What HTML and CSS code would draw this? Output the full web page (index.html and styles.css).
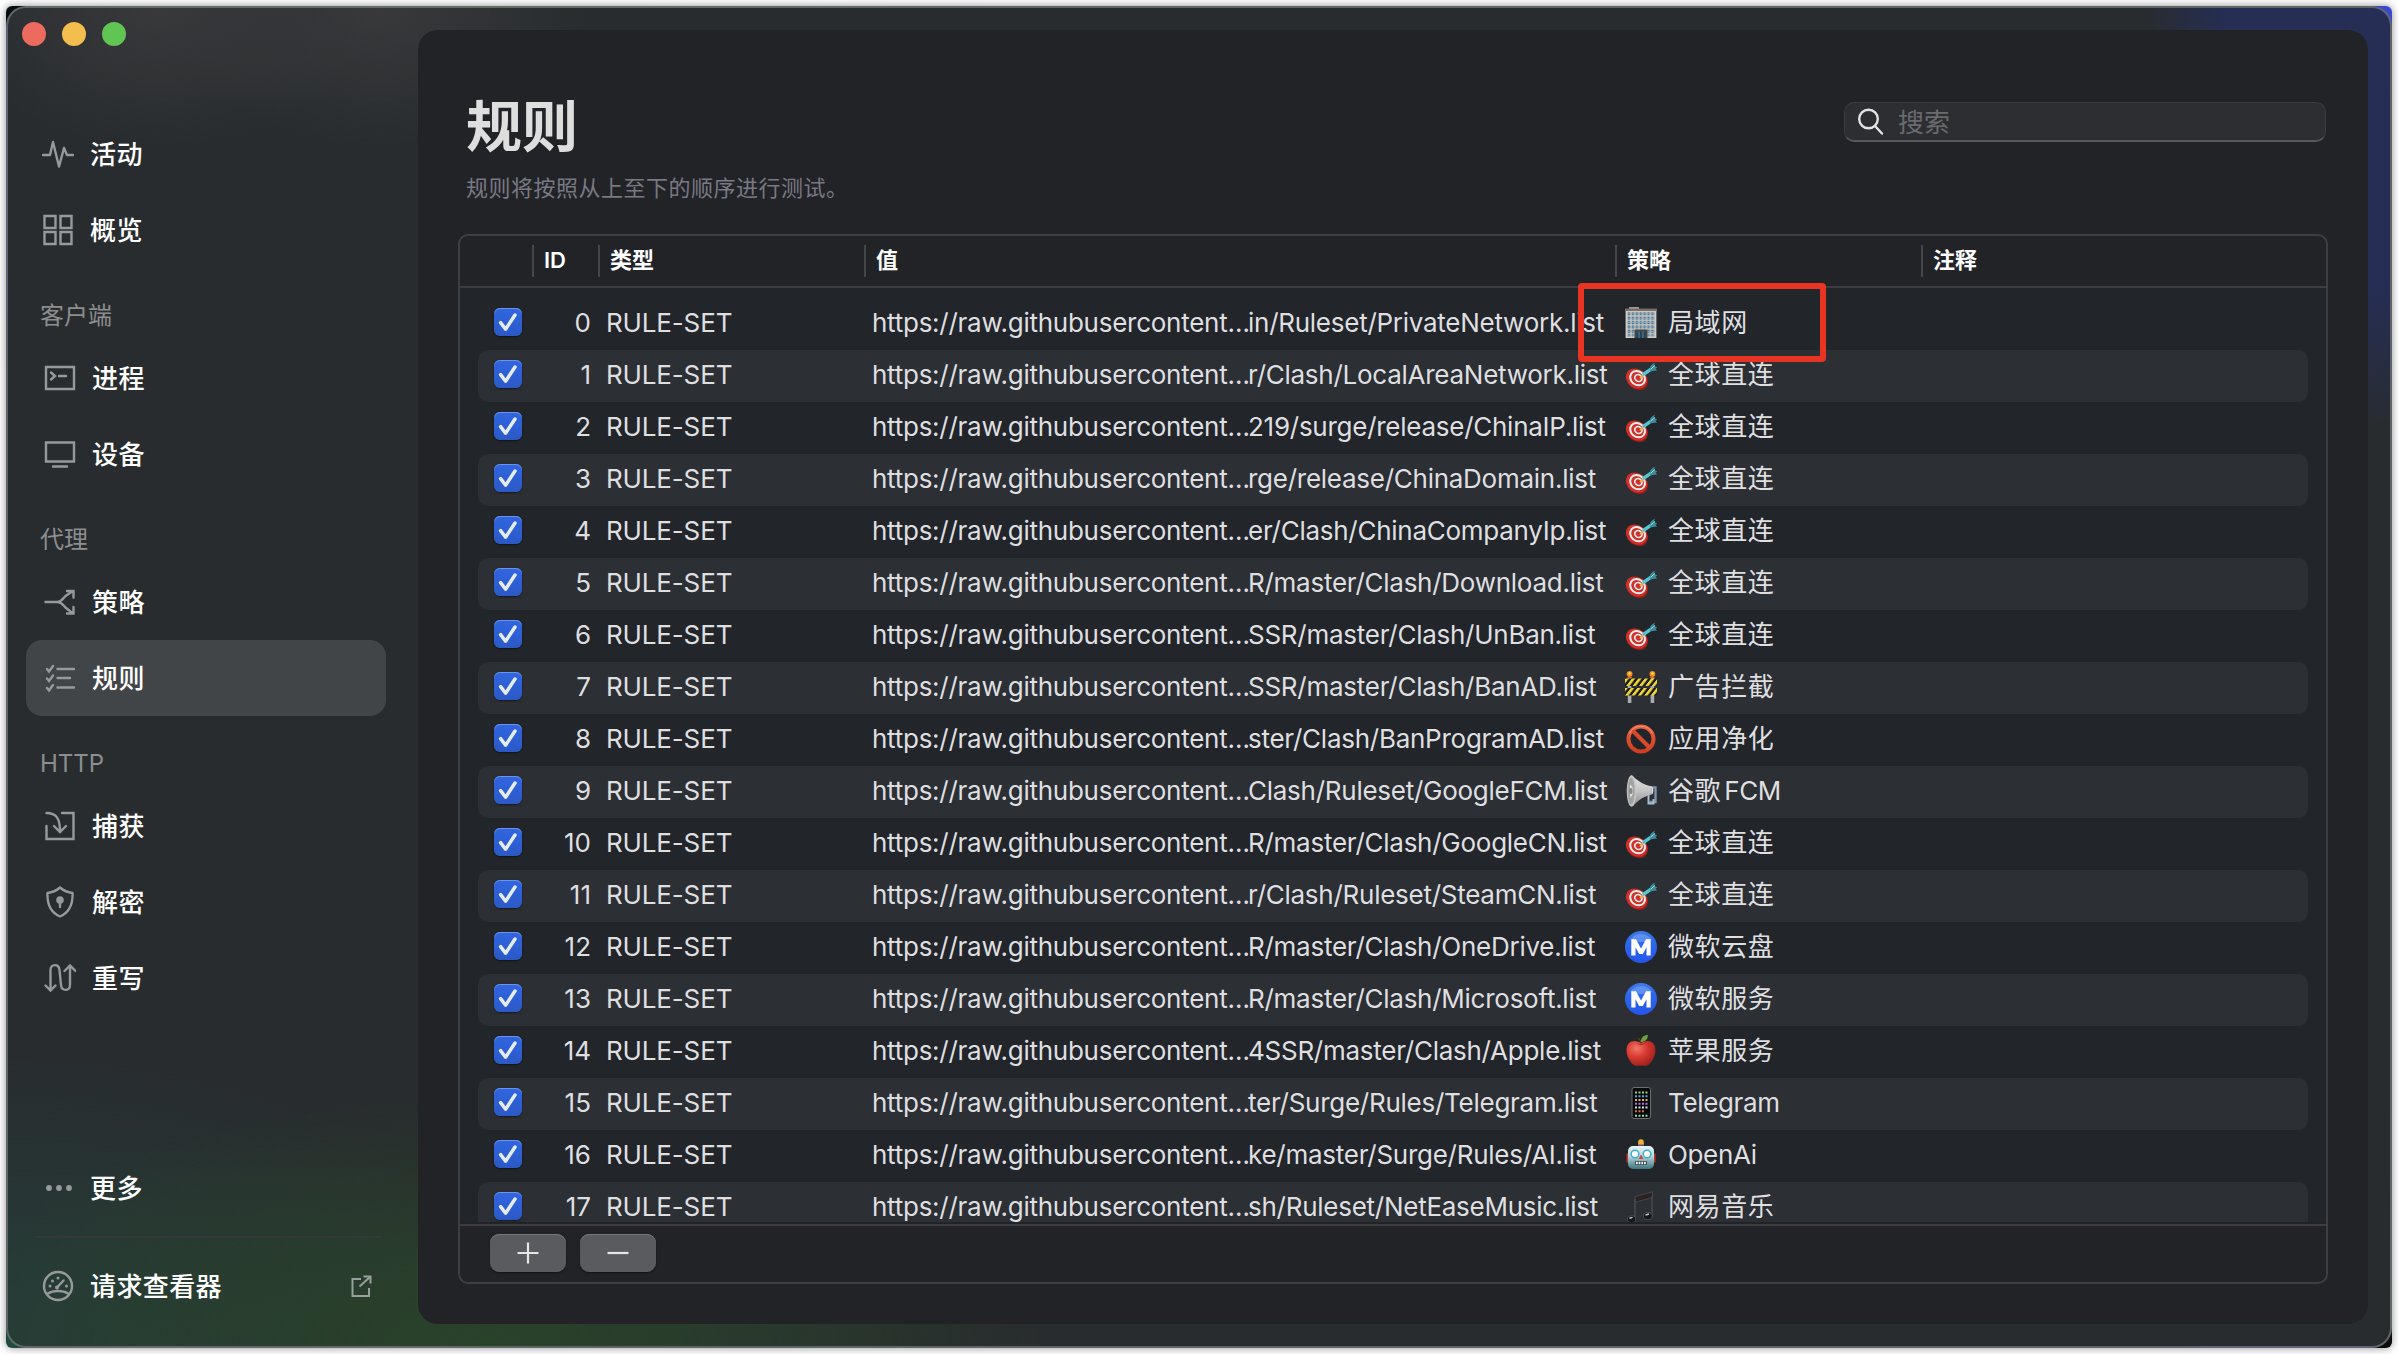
FILE: index.html
```
<!DOCTYPE html>
<html lang="zh-CN">
<head>
<meta charset="utf-8">
<title>规则</title>
<link rel="stylesheet" href="styles.css">
</head>
<body>
<svg class="defs" width="0" height="0" aria-hidden="true">
  <defs>
    <linearGradient id="g-blue" x1="0" y1="0" x2="0" y2="1"><stop offset="0" stop-color="#3f7bea"/><stop offset=".3" stop-color="#2f69ee"/><stop offset="1" stop-color="#2456ea"/></linearGradient>
    <linearGradient id="g-horn" x1="0" y1="0" x2="0" y2="1"><stop offset="0" stop-color="#e4e4e4"/><stop offset=".5" stop-color="#c4c4c4"/><stop offset="1" stop-color="#8c8c8c"/></linearGradient>
    <radialGradient id="g-apple" cx=".35" cy=".3" r=".8"><stop offset="0" stop-color="#f0776b"/><stop offset=".45" stop-color="#d9382f"/><stop offset="1" stop-color="#8e1f1a"/></radialGradient>
    <linearGradient id="g-robot" x1="0" y1="0" x2="0" y2="1"><stop offset="0" stop-color="#e8f6f7"/><stop offset=".45" stop-color="#b5d3d8"/><stop offset="1" stop-color="#3f7680"/></linearGradient>
    <linearGradient id="g-ban" x1="0" y1="0" x2="0" y2="1"><stop offset="0" stop-color="#e8603f"/><stop offset="1" stop-color="#d03e22"/></linearGradient>
    <pattern id="p-stripe" width="6.4" height="8" patternUnits="userSpaceOnUse" patternTransform="skewX(-38)"><rect width="6.4" height="8" fill="#1d1b12"/><rect width="3.3" height="8" fill="#ecd43c"/></pattern>
    <pattern id="p-win" x="2" y="4.6" width="3.9" height="4.4" patternUnits="userSpaceOnUse"><rect width="3.9" height="4.4" fill="#d0ccc4"/><rect x=".7" y=".6" width="2.6" height="3.1" fill="#4a7393"/><rect x=".7" y="1.9" width="2.6" height=".6" fill="#9fc0d4"/></pattern>
  </defs>
  <symbol id="check" viewBox="0 0 28 28"><path d="M6.600 14.600l5 6.600L21 7" fill="none" stroke="#e4ebfa" stroke-width="3.500" stroke-linecap="round" stroke-linejoin="round"/></symbol>
  <symbol id="e-office" viewBox="0 0 32 32"><path d="M4 0h10v3H4z" fill="#9c9a96"/><path d="M0 1.6h32v2.6H0z" fill="#7c6e68"/><path d="M.6 4h30.8v27H.6z" fill="#d0ccc4"/><path d="M2 4.8h28v24.6H2z" fill="url(#p-win)"/><path d="M9.5 22.5h13V31h-13z" fill="#4b4644"/><path d="M11 24.5h10V31H11z" fill="#24455c"/><path d="M14 24.5v6.5M18 24.5v6.5" stroke="#6e93a8" stroke-width=".8"/></symbol>
  <symbol id="e-dart" viewBox="0 0 32 32"><g transform="translate(.4 1.600)"><ellipse cx="11.800" cy="19.200" rx="11.600" ry="9.600" fill="#8f1f1c" transform="rotate(38 11.8 19.2)"/><ellipse cx="11.2" cy="18" rx="11.400" ry="9.400" fill="#cf3029" transform="rotate(38 11.2 18)"/><ellipse cx="12.2" cy="17.600" rx="7.800" ry="6.700" fill="none" stroke="#f4ecea" stroke-width="2" transform="rotate(38 12.2 17.6)"/><ellipse cx="13" cy="17.400" rx="3.800" ry="3.300" fill="#cf3029" stroke="#f4ecea" stroke-width="1.7" transform="rotate(38 13 17.4)"/><path d="M14.500 17.500l5-4.500" stroke="#e2b33a" stroke-width="1.5"/><path d="M18.6 13.400l7-4.800" stroke="#54c3d2" stroke-width="3.400" stroke-linecap="round"/><path d="M24.2 9.800L25 5.400 29.200 2l-.4 3.400 3.200 1.400-2 1.400 1.800 1.600-6 .8z" fill="#3e8e99"/><path d="M25 8.800l4.600-4" stroke="#8fdde6" stroke-width="1"/></g></symbol>
  <symbol id="e-barrier" viewBox="0 0 32 32"><path d="M2.8 6h3.6v26H2.8zM25.6 6h3.6v26h-3.6z" fill="#a9abae"/><circle cx="4.6" cy="3" r="2.9" fill="#f58a1f"/><circle cx="27.4" cy="3" r="2.9" fill="#f58a1f"/><circle cx="4.6" cy="2.6" r="1.4" fill="#ffd84a"/><circle cx="27.4" cy="2.6" r="1.4" fill="#ffd84a"/><path d="M2.8 5.4h3.6v2H2.8zM25.6 5.4h3.6v2h-3.6z" fill="#d96a2b"/><path d="M0 7.6h32v7.4H0zM0 17h32v7.4H0z" fill="url(#p-stripe)"/></symbol>
  <symbol id="e-ban" viewBox="0 0 32 32"><circle cx="16" cy="16" r="12.5" fill="none" stroke="url(#g-ban)" stroke-width="4"/><path d="M7.5 7.5l17 17" stroke="#d9492c" stroke-width="4"/><path d="M4.5 10.5a12.8 12.8 0 0 1 23 0" fill="none" stroke="#f3a38b" stroke-width=".8"/></symbol>
  <symbol id="e-horn" viewBox="0 0 32 32"><path d="M24.5 12.5h6V27h-6" fill="none" stroke="#7d94ac" stroke-width="2.4"/><path d="M23.5 18v10.5h5V24" fill="none" stroke="#a9bccb" stroke-width="2"/><path d="M6.5.3C12 5 17 9.6 26.5 11.2v8.4C17 21.8 12 27 7.5 31.7z" fill="url(#g-horn)"/><ellipse cx="6.5" cy="16" rx="4.8" ry="15.7" fill="#c6c6c6"/><ellipse cx="6.2" cy="16" rx="3.5" ry="13.6" fill="#a2a2a2"/><path d="M5 9.5c4 2 4 11 0 13z" fill="#dedede"/><ellipse cx="6" cy="16" rx="1.6" ry="3" fill="#858585"/><path d="M26.5 11.2c2.4.6 2.4 7.8 0 8.4z" fill="#e8e8e8"/></symbol>
  <symbol id="e-metro" viewBox="0 0 32 32"><circle cx="16" cy="16" r="16" fill="url(#g-blue)"/><path d="M5 9a13 13 0 0 1 22 0 30 30 0 0 1-22 0z" fill="#7fa9f5" opacity=".55"/><path d="M8.4 24.4V8.2M23.6 24.4V8.2M9 9l7 13 7-13" fill="none" stroke="#fff" stroke-width="4.2" stroke-linejoin="bevel"/></symbol>
  <symbol id="e-apple" viewBox="0 0 32 32"><path d="M16 8.2C19 6 25 4.6 28.4 8.4c3.2 4 2.3 10.600-.1 15.200-2.300 4.600-5.400 8-8.800 7.300-2.400-.6-4.600-.6-7 0-3.400.7-6.500-2.700-8.800-7.300C1.300 19 .4 12.400 3.600 8.400 7 4.600 13 6 16 8.200z" fill="url(#g-apple)"/><path d="M11.500 7.600c2 2 7 2 9 0-1.500 3-7.500 3-9 0z" fill="#8e1f1a"/><path d="M16 8.400c0-2-1-4-3-5.400" fill="none" stroke="#6b3a22" stroke-width="1.300"/><path d="M15.800 7c.2-4.400 3-7 7-7 .2 4.400-2.800 7-7 7z" fill="#6aa437"/></symbol>
  <symbol id="e-phone" viewBox="0 0 32 32"><rect x="7" y=".5" width="18.500" height="31" rx="2" fill="#08090a" stroke="#6c6f70"/><g stroke-width="2" stroke-dasharray="2 1.500"><path d="M10 5.500h13" stroke="#8fd36b"/><path d="M10 9.200h13" stroke="#5aa7e0"/><path d="M10 13h13" stroke="#e0b35f"/><path d="M10 16.800h13" stroke="#b06ee8"/><path d="M10 20.600h13" stroke="#d8dee0"/><path d="M10 24.200h9.500" stroke="#e0694a"/><path d="M10 28.800h13" stroke="#7fe0b0"/></g></symbol>
  <symbol id="e-robot" viewBox="0 0 32 32"><path d="M13 4.500h6V9h-6z" fill="#6e4a8c"/><path d="M13.200 5.500V3a2.800 2.800 0 0 1 5.600 0v2.500z" fill="#f2b233"/><path d="M1.500 14.500h5v9h-5zM25.500 14.500h5v9h-5z" fill="#c4342c"/><rect x="3" y="7" width="26" height="23" rx="5" fill="url(#g-robot)"/><circle cx="10" cy="15" r="3.800" fill="#fff" stroke="#3bb0cf" stroke-width="1.500"/><circle cx="22" cy="15" r="3.800" fill="#fff" stroke="#3bb0cf" stroke-width="1.500"/><path d="M16 15.500l2.500 4.600h-5z" fill="#cf4538"/><rect x="10" y="22" width="12" height="4" rx="1" fill="#33444a"/><path d="M11 24h10" stroke="#fff" stroke-width="2.400" stroke-dasharray="1.700 1"/></symbol>
  <symbol id="e-music" viewBox="0 0 32 32"><path d="M10 5.600L27.500.800v5.800L10 11.200z" fill="#2b2223" stroke="#565254" stroke-width=".7"/><path d="M10 8v20M27 5v20" stroke="#474c52" stroke-width="1.500"/><ellipse cx="6.500" cy="28.200" rx="4.200" ry="3.400" fill="#15171a" stroke="#50555a" stroke-width=".8"/><ellipse cx="22.800" cy="25" rx="4.400" ry="3.600" fill="#15171a" stroke="#50555a" stroke-width=".8"/><path d="M4.500 27.200l3-.8M20.500 24l3.500-1" stroke="#c7cbd0" stroke-width="1.400"/></symbol>
</svg>

<div class="desktop">
<div class="window">
  <aside class="sidebar">
    <div class="lights"><i class="red"></i><i class="yellow"></i><i class="green"></i></div>
    <nav class="nav">
      <a class="item top"><svg class="ico" viewBox="0 0 32 32"><path d="M1 17h7l3-13 6 24.500 5-18.500 3 7h6" stroke-linejoin="round"/></svg><span>活动</span></a>
      <a class="item top"><svg class="ico" viewBox="0 0 32 32"><path d="M2.500 2h11v12h-11zM18.500 2h11v12h-11zM2.500 18h11v12h-11zM18.500 18h11v12h-11z"/></svg><span>概览</span></a>
      <h2>客户端</h2>
      <a class="item"><svg class="ico" viewBox="0 0 32 32"><path d="M2 5h28v22H2zM7 10.500l4 3.500-4 3.500M15 14h7"/></svg><span>进程</span></a>
      <a class="item"><svg class="ico" viewBox="0 0 32 32"><path d="M2 4.500h28v19H2zM9 28.500h14"/></svg><span>设备</span></a>
      <h2>代理</h2>
      <a class="item"><svg class="ico" viewBox="0 0 32 32"><path d="M1.500 16h12c4 0 5-3 8-6l7.500-5M13.500 16c4 0 5 2.500 8 5.500l7.500 6M23 5h6.500v6.500M23 27.500h6.500v-6.500"/></svg><span>策略</span></a>
      <a class="item active"><svg class="ico" viewBox="0 0 32 32"><path d="M13.500 7H30M13.500 16H26M13.500 25.500H30M3 7l2 2.500L9 4M3 16.500L5 19l4-5.500M3 26l2 2.500L9 23"/></svg><span>规则</span></a>
      <h2 class="latin-head">HTTP</h2>
      <a class="item"><svg class="ico" viewBox="0 0 32 32"><path d="M18 3h11.500v26h-27V16M2.500 3C12 3 16 8 16 21M10 16l6 6 6-6"/></svg><span>捕获</span></a>
      <a class="item"><svg class="ico" viewBox="0 0 32 32"><path d="M16 1.500c4 3.500 8 5 12.500 5.500C29 18 25 26.500 16 30.500 7 26.500 3 18 3.500 7 8 6.500 12 5 16 1.500z" stroke-linejoin="round"/><circle cx="16" cy="14" r="3.800" class="fill"/><path d="M16 14v7"/></svg><span>解密</span></a>
      <a class="item"><svg class="ico" viewBox="0 0 32 32"><path d="M1.500 23.500l5 5 5-5M6.500 28V8c0-6.500 8.500-6.500 9 0l1.500 15c.5 6.500 9 6.500 9 0V4M20.500 9l5.500-5.500L31.500 9"/></svg><span>重写</span></a>
    </nav>
    <div class="bottom">
      <a class="item top"><svg class="ico" viewBox="0 0 32 32"><g class="fill"><circle cx="7" cy="16" r="2.900"/><circle cx="17" cy="16" r="2.900"/><circle cx="27" cy="16" r="2.900"/></g></svg><span>更多</span></a>
      <hr>
      <a class="item top viewer"><svg class="ico" viewBox="0 0 32 32"><circle cx="16" cy="16" r="14"/><path d="M15.500 17l6-6.500M6 23.500c3-2 6-2.500 10-2.500s7 .5 10 2.500"/><g class="fill"><circle cx="8" cy="16" r="1.500"/><circle cx="10.500" cy="11" r="1.500"/><circle cx="16" cy="8" r="1.500"/><circle cx="24.500" cy="16" r="1.500"/><circle cx="15" cy="17.500" r="2"/></g></svg><span>请求查看器</span>
      <svg class="ext" viewBox="0 0 24 24"><path d="M11 5H2.500v17H19v-8M9.500 12.500L20 3M13.500 2.500h7V9.500"/></svg></a>
    </div>
  </aside>

  <main class="panel">
    <header class="head">
      <div>
        <h1>规则</h1>
        <p class="sub">规则将按照从上至下的顺序进行测试。</p>
      </div>
      <div class="search"><svg viewBox="0 0 30 30"><circle cx="12.500" cy="12" r="9.300"/><path d="M19 19l7 7.500"/></svg><span>搜索</span></div>
    </header>

    <section class="table">
      <div class="thead"><b></b><b>ID</b><b>类型</b><b>值</b><b>策略</b><b>注释</b></div>
      <div class="tbody">
        <div class="row"><svg class="cb"><use href="#check"/></svg><span class="id">0</span><span class="type">RULE-SET</span><span class="val"><span class="host">https://raw.githubusercontent…</span>in/Ruleset/PrivateNetwork.list</span><span class="pol"><svg><use href="#e-office"/></svg>局域网</span></div>
        <div class="row"><svg class="cb"><use href="#check"/></svg><span class="id">1</span><span class="type">RULE-SET</span><span class="val"><span class="host">https://raw.githubusercontent…</span>r/Clash/LocalAreaNetwork.list</span><span class="pol"><svg><use href="#e-dart"/></svg>全球直连</span></div>
        <div class="row"><svg class="cb"><use href="#check"/></svg><span class="id">2</span><span class="type">RULE-SET</span><span class="val"><span class="host">https://raw.githubusercontent…</span>219/surge/release/ChinaIP.list</span><span class="pol"><svg><use href="#e-dart"/></svg>全球直连</span></div>
        <div class="row"><svg class="cb"><use href="#check"/></svg><span class="id">3</span><span class="type">RULE-SET</span><span class="val"><span class="host">https://raw.githubusercontent…</span>rge/release/ChinaDomain.list</span><span class="pol"><svg><use href="#e-dart"/></svg>全球直连</span></div>
        <div class="row"><svg class="cb"><use href="#check"/></svg><span class="id">4</span><span class="type">RULE-SET</span><span class="val"><span class="host">https://raw.githubusercontent…</span>er/Clash/ChinaCompanyIp.list</span><span class="pol"><svg><use href="#e-dart"/></svg>全球直连</span></div>
        <div class="row"><svg class="cb"><use href="#check"/></svg><span class="id">5</span><span class="type">RULE-SET</span><span class="val"><span class="host">https://raw.githubusercontent…</span>R/master/Clash/Download.list</span><span class="pol"><svg><use href="#e-dart"/></svg>全球直连</span></div>
        <div class="row"><svg class="cb"><use href="#check"/></svg><span class="id">6</span><span class="type">RULE-SET</span><span class="val"><span class="host">https://raw.githubusercontent…</span>SSR/master/Clash/UnBan.list</span><span class="pol"><svg><use href="#e-dart"/></svg>全球直连</span></div>
        <div class="row"><svg class="cb"><use href="#check"/></svg><span class="id">7</span><span class="type">RULE-SET</span><span class="val"><span class="host">https://raw.githubusercontent…</span>SSR/master/Clash/BanAD.list</span><span class="pol"><svg><use href="#e-barrier"/></svg>广告拦截</span></div>
        <div class="row"><svg class="cb"><use href="#check"/></svg><span class="id">8</span><span class="type">RULE-SET</span><span class="val"><span class="host">https://raw.githubusercontent…</span>ster/Clash/BanProgramAD.list</span><span class="pol"><svg><use href="#e-ban"/></svg>应用净化</span></div>
        <div class="row"><svg class="cb"><use href="#check"/></svg><span class="id">9</span><span class="type">RULE-SET</span><span class="val"><span class="host">https://raw.githubusercontent…</span>Clash/Ruleset/GoogleFCM.list</span><span class="pol"><svg><use href="#e-horn"/></svg>谷歌<span class="latin mix">FCM</span></span></div>
        <div class="row"><svg class="cb"><use href="#check"/></svg><span class="id">10</span><span class="type">RULE-SET</span><span class="val"><span class="host">https://raw.githubusercontent…</span>R/master/Clash/GoogleCN.list</span><span class="pol"><svg><use href="#e-dart"/></svg>全球直连</span></div>
        <div class="row"><svg class="cb"><use href="#check"/></svg><span class="id">11</span><span class="type">RULE-SET</span><span class="val"><span class="host">https://raw.githubusercontent…</span>r/Clash/Ruleset/SteamCN.list</span><span class="pol"><svg><use href="#e-dart"/></svg>全球直连</span></div>
        <div class="row"><svg class="cb"><use href="#check"/></svg><span class="id">12</span><span class="type">RULE-SET</span><span class="val"><span class="host">https://raw.githubusercontent…</span>R/master/Clash/OneDrive.list</span><span class="pol"><svg><use href="#e-metro"/></svg>微软云盘</span></div>
        <div class="row"><svg class="cb"><use href="#check"/></svg><span class="id">13</span><span class="type">RULE-SET</span><span class="val"><span class="host">https://raw.githubusercontent…</span>R/master/Clash/Microsoft.list</span><span class="pol"><svg><use href="#e-metro"/></svg>微软服务</span></div>
        <div class="row"><svg class="cb"><use href="#check"/></svg><span class="id">14</span><span class="type">RULE-SET</span><span class="val"><span class="host">https://raw.githubusercontent…</span>4SSR/master/Clash/Apple.list</span><span class="pol"><svg><use href="#e-apple"/></svg>苹果服务</span></div>
        <div class="row"><svg class="cb"><use href="#check"/></svg><span class="id">15</span><span class="type">RULE-SET</span><span class="val"><span class="host">https://raw.githubusercontent…</span>ter/Surge/Rules/Telegram.list</span><span class="pol"><svg><use href="#e-phone"/></svg><span class="latin">Telegram</span></span></div>
        <div class="row"><svg class="cb"><use href="#check"/></svg><span class="id">16</span><span class="type">RULE-SET</span><span class="val"><span class="host">https://raw.githubusercontent…</span>ke/master/Surge/Rules/AI.list</span><span class="pol"><svg><use href="#e-robot"/></svg><span class="latin">OpenAi</span></span></div>
        <div class="row"><svg class="cb"><use href="#check"/></svg><span class="id">17</span><span class="type">RULE-SET</span><span class="val"><span class="host">https://raw.githubusercontent…</span>sh/Ruleset/NetEaseMusic.list</span><span class="pol"><svg><use href="#e-music"/></svg>网易音乐</span></div>
      </div>
      <div class="tfoot">
        <button aria-label="添加"><svg viewBox="0 0 24 24"><path d="M1.500 12h21M12 1.500v21"/></svg></button>
        <button aria-label="移除"><svg viewBox="0 0 24 24"><path d="M1.500 12h21"/></svg></button>
      </div>
    </section>
  </main>
</div>
</div>
<div class="marker"></div>
</body>
</html>
```
FILE: styles.css
```
* { box-sizing: border-box; }

body {
  margin: 0;
  width: 2398px;
  height: 1354px;
  padding: 6px;
  overflow: hidden;
  background: #fff;
  font-family: Inter, "Noto Sans CJK SC", sans-serif;
  color: #dfdfe0;
}

.defs { position: absolute; }

.desktop {
  height: 1342px;
  border-radius: 6px;
  overflow: hidden;
  background: linear-gradient(90deg, #08100f 0 50%, #3a48cc 50%) top / 100% 60px no-repeat,
    linear-gradient(90deg, #1f4a3f 0 50%, #0c0c0c 50%);
  box-shadow: 0 0 8px rgba(0, 0, 0, .45);
}

.window {
  height: 100%;
  display: flex;
  border-radius: 20px;
  border: 2px solid rgba(150, 155, 158, .5);
  background:
    radial-gradient(210px 140px at 150px 0, #39393c, transparent),
    radial-gradient(210px 140px at 372px 0, #39393c, transparent),
    radial-gradient(250px 430px at 2384px 0, #262e56 0 64%, transparent),
    radial-gradient(560px 250px at 480px 1338px, #29422a 0, rgba(41, 66, 42, .75) 35%, transparent),
    radial-gradient(520px 290px at 0 1338px, #263b38 20%, transparent),
    #282c2e;
}

/* Sidebar */
.sidebar { width: 410px; display: flex; flex-direction: column; }
.lights { display: flex; gap: 16px; padding: 14px 0 0 14px; height: 108px; }
.lights i { width: 24px; height: 24px; border-radius: 50%; }
.red { background: #ed6a5e; }
.yellow { background: #f4be4f; }
.green { background: #61c554; }

.nav { padding-left: 18px; }
.item {
  display: flex;
  align-items: center;
  width: 360px;
  height: 76px;
  padding-left: 18px;
  border-radius: 16px;
  font-size: 26px;
  font-weight: 500;
  letter-spacing: .4px;
  color: #fff;
}
.item > span { margin-left: 16px; padding-bottom: 3px; }
.item.top { padding-left: 16px; }
.active { background: #424547; }
.nav h2 {
  margin: 0;
  height: 72px;
  padding: 19px 0 0 14px;
  font-size: 24px;
  font-weight: 400;
  color: #8c8e90;
  display: flex;
  align-items: center;
}
.nav h2.latin-head { padding-top: 22px; }
.ico { width: 32px; height: 32px; fill: none; stroke: #97999b; stroke-width: 2.4; stroke-linecap: round; }
.fill { fill: #97999b; stroke: none; }

.bottom { margin-top: auto; padding: 0 0 22px 18px; }
.bottom hr { width: 346px; height: 2px; border: 0; margin: 10px 0 10px 10px; background: #333a39; }
.ext { width: 24px; height: 26px; margin-left: auto; margin-right: 12px; fill: none; stroke: #97a09b; stroke-width: 2; }

/* Main panel */
.panel {
  margin-top: 22px;
  width: 1950px;
  height: 1294px;
  border-radius: 20px;
  background: #222327;
  padding: 0 40px;
}
.head { display: flex; justify-content: space-between; height: 204px; padding: 0 2px 0 8px; }
h1 { margin: 57px 0 0; font-size: 56px; line-height: 80px; font-weight: 700; color: #dededf; }
.sub { margin: 5px 0 0; font-size: 22px; line-height: 32px; letter-spacing: .5px; color: #787983; }
.search {
  display: flex;
  align-items: center;
  width: 482px;
  height: 40px;
  margin-top: 72px;
  padding-left: 11px;
  border-radius: 10px;
  border: 1px solid #3b3c3f;
  border-bottom: 2px solid #58595c;
  background: #2d2e31;
  font-size: 26px;
  color: #6a6b6e;
}
.search svg { width: 30px; height: 30px; fill: none; stroke: #e3e3e4; stroke-width: 2.4; stroke-linecap: round; }
.search span { margin-left: 12px; padding-top: 2px; line-height: 35px; }

/* Rules table */
.table { height: 1050px; border: 2px solid #3d3e42; border-radius: 10px; display: flex; flex-direction: column; }
.thead {
  display: grid;
  grid-template-columns: 72px 66px 266px 751px 306px 1fr;
  align-items: center;
  height: 52px;
  flex: none;
  border-bottom: 2px solid #3d3e42;
  color: #fff;
  font-size: 22px;
  font-weight: 600;
}
.thead b { height: 32px; line-height: 30px; font-weight: 600; padding-left: 10px; border-left: 2px solid #454649; }
.thead b:first-child { border: 0; }
.tbody { height: 934px; overflow: hidden; padding: 10px 18px 0; background: #22252a; }
.row {
  display: grid;
  grid-template-columns: 38px 59px 265px 754px 1fr;
  align-items: center;
  height: 52px;
  padding: 0 0 2px 16px;
  border-radius: 10px;
  font-size: 26px;
  line-height: 32px;
  white-space: nowrap;
}
.row:nth-child(even) { background: #2c2f34; }
.id { text-align: right; }
.type { padding-left: 15px; letter-spacing: -.15px; }
.val { padding-left: 16px; letter-spacing: -.26px; }
.host { display: inline-block; width: 376px; letter-spacing: -.26px; }
.pol { display: flex; align-items: center; padding-left: 15px; letter-spacing: .6px; }
.pol svg { width: 32px; height: 32px; margin-right: 11px; }
.latin { letter-spacing: -.35px; }
.mix { margin-left: 3px; }
.cb {
  width: 28px;
  height: 28px;
  margin-bottom: 2px;
  border-radius: 6px;
  background: linear-gradient(#3066e0, #2b59c6);
  box-shadow: inset 0 1px 0 #6c93ea, 0 1px 2px rgba(0, 0, 0, .5);
}
.tfoot { flex: 1; margin-top: 2px; border-top: 2px solid #3d3e42; display: flex; gap: 14px; padding: 8px 0 0 30px; }
.tfoot button {
  width: 76px;
  height: 38px;
  padding: 0;
  border: 0;
  border-radius: 9px;
  background: #5a5b5e;
  box-shadow: inset 0 1px 0 #77787a, 0 1px 2px rgba(0, 0, 0, .5);
  display: flex;
  align-items: center;
  justify-content: center;
}
.tfoot svg { width: 24px; height: 24px; stroke: #e6e6e7; stroke-width: 2.2; fill: none; }

/* Annotation laid over the first policy cell */
.marker {
  position: absolute;
  left: 1578px;
  top: 283px;
  width: 248px;
  height: 79px;
  border: 6px solid #e93323;
  border-radius: 4px;
}
```
